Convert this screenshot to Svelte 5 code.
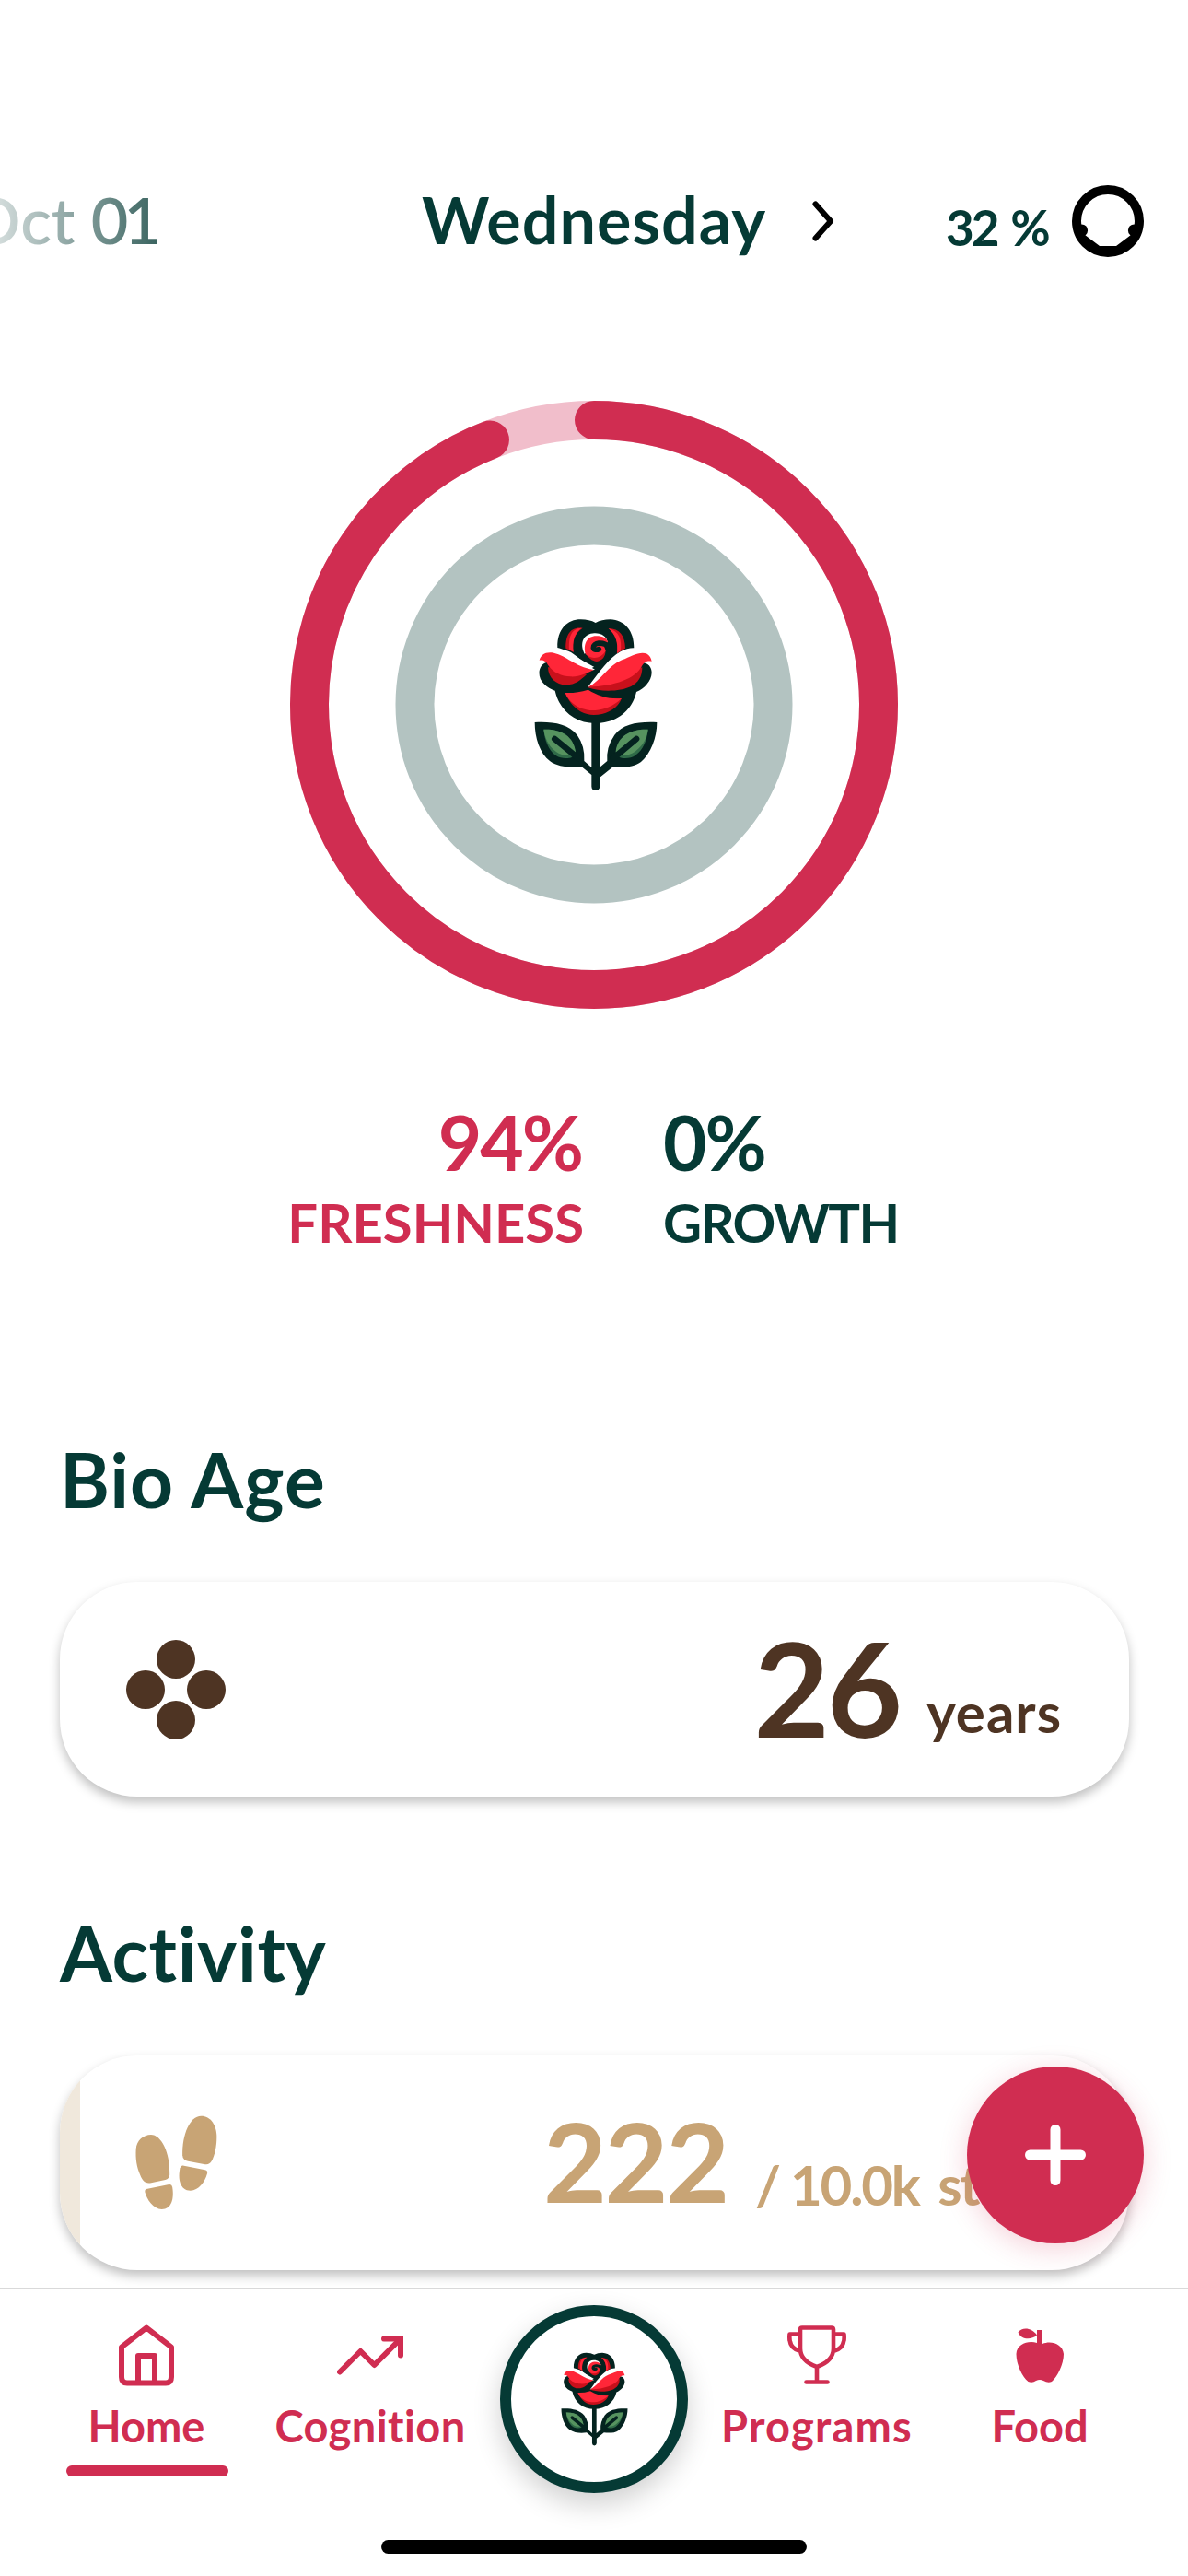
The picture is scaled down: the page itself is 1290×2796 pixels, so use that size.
<script>
  const freshness = 94;
  const growth = 0;
  const radius = 309;
  const length = 2 * Math.PI * radius;
  const steps = 222;
</script>

{#snippet rose()}
  <svg class="rose" viewBox="60 60 402 564">
    <g fill="#04231f">
      <path d="M136 156C134 96 168 64 212 64Q240 64 260 75Q280 64 308 64C354 66 386 100 385 158C350 170 330 190 262 222C200 190 170 164 136 156Z" />
      <path d="M102 203C70 212 70 254 92 274C104 286 116 292 128 296C142 360 192 402 260 402C328 402 380 360 393 300C420 290 442 264 443 238C443 220 432 206 413 205L300 200L262 215L240 226Z" />
      <path d="M247 390H273V546L298 525Q294 480 322 440C350 404 400 396 460 399C460 450 440 500 408 528C380 548 345 545 318 543L274 578V608Q272 621 260 621Q248 621 247 608V570L214 543C180 547 140 546 112 526C78 500 62 450 62 399C120 396 170 404 200 440Q226 476 223 525L247 546Z" />
    </g>
    <g fill="#fff">
      <path d="M100 172C130 155 160 160 180 171C206 188 226 210 258 227L220 236L120 190Z" />
      <path d="M234 286C272 234 304 190 342 168C370 154 400 150 424 174L380 210Z" />
      <path d="M224 176C206 140 222 110 256 109C280 108 296 120 299 137L250 160Z" />
    </g>
    <g fill="#c8101b">
      <path d="M218 92C184 88 162 106 163 158L188 170C184 136 190 110 218 92Z" />
      <path d="M302 93C338 94 356 116 357 158L330 174C334 138 326 114 302 93Z" />
      <path d="M105 220C106 256 134 278 164 277C196 276 210 262 232 242L160 220Z" />
      <path d="M236 286C276 300 338 300 376 282C398 270 412 252 412 220L330 250Z" />
      <path d="M161 303C180 350 216 375 254 375C298 375 334 352 345 321L250 320Z" />
      <path d="M226 168C232 188 250 200 264 201C282 198 292 186 293 166L260 160Z" />
    </g>
    <g fill="#ff2638">
      <path d="M214 92C184 94 172 114 174 162L188 170C184 136 190 110 214 92Z" />
      <path d="M302 93C338 102 346 130 342 166L330 174C334 138 326 114 302 93Z" />
      <path d="M77 197C82 178 98 168 124 173C166 182 190 216 254 228C230 240 206 252 178 250C150 248 122 238 105 212C100 200 88 194 77 197Z" />
      <path d="M236 284C278 264 300 214 346 196C378 184 404 166 428 176Q440 184 443 200C428 198 420 200 411 216C388 258 326 280 236 284Z" />
      <path d="M161 303Q196 305 236 293C270 314 304 324 345 321C318 348 280 362 242 360C204 354 176 338 161 303Z" />
      <path d="M228 178C218 146 232 118 262 118C284 118 298 126 300 138L288 150L293 166C284 184 262 194 244 187Q234 184 228 178Z" />
    </g>
    <path d="M304 154C284 134 252 140 253 156C255 164 264 164 271 161" fill="none" stroke="#04231f" stroke-width="17" stroke-linecap="round" />
    <g fill="#2f6b48">
      <path d="M91 422C146 420 188 442 195 500C190 520 150 520 132 508C106 490 94 456 91 422Z" />
      <path d="M431 422C376 420 332 442 326 500C330 520 372 520 390 506C416 488 428 456 431 422Z" />
    </g>
    <g fill="#56935f">
      <path d="M91 422C146 420 188 442 195 494C190 512 146 510 128 492C106 474 94 448 91 422Z" />
      <path d="M431 422C376 420 332 442 326 494C330 512 376 510 394 490C416 472 428 448 431 422Z" />
    </g>
    <path d="M127 453L204 516M393 453L318 516" stroke="#04231f" stroke-width="20" stroke-linecap="round" />
  </svg>
{/snippet}

<main class="screen">
  <header class="top">
    <span class="prev"><span class="t prev-t">Oct <span class="date">01</span></span></span>
    <span class="t day">Wednesday</span>
    <svg class="chev" viewBox="0 0 24 44"><path d="M3.5 3.5L20 22L3.5 40.5" /></svg>
    <span class="t battery">32 %</span>
    <svg class="gauge" viewBox="0 0 78 78">
      <circle cx="39" cy="39" r="34" fill="none" stroke="#000" stroke-width="10" />
      <circle cx="10.5" cy="49" r="6.6" /><circle cx="67.5" cy="49" r="6.6" />
      <path d="M14 54L30 66H48L64 54L60 66L39 76L18 66Z" />
    </svg>
  </header>

  <section class="rings">
    <svg viewBox="0 0 660 660">
      <g fill="none" stroke-width="42">
        <circle cx="330" cy="330" r={radius} stroke="#f1becb" />
        <circle cx="330" cy="330" r="194.5" stroke="#b3c3c1" />
        <circle cx="330" cy="330" r={radius} stroke="#d02d51" stroke-linecap="round"
          stroke-dasharray="{(length * freshness) / 100} {length}" transform="rotate(-90 330 330)" />
      </g>
    </svg>
    <div class="core">{@render rose()}</div>
  </section>

  <section class="stats">
    <div class="stat fresh"><span class="t pct">{freshness}%</span><span class="t lbl">FRESHNESS</span></div>
    <div class="stat grow"><span class="t pct">{growth}%</span><span class="t lbl">GROWTH</span></div>
  </section>

  <h2 class="t bio">Bio Age</h2>
  <section class="card age">
    <svg class="dots" viewBox="0 0 108 108">
      <circle cx="54" cy="21" r="21" /><circle cx="21" cy="54" r="21" /><circle cx="87" cy="54" r="21" /><circle cx="54" cy="87" r="21" />
    </svg>
    <span class="t num">26</span><span class="t unit">years</span>
  </section>

  <h2 class="t act">Activity</h2>
  <section class="card walk">
    <div class="fill" style="width: {steps / 10}px"></div>
    <svg class="feet" viewBox="80 76 268 310">
      <path d="M131 139C164 139 194 196 192 270Q191 283 178 287L128 297C112 299 103 290 96 272C84 244 80 218 82 186C84 158 106 139 131 139Z" />
      <path d="M116 317L190 302Q199 301 201 311C207 350 198 383 166 383C138 382 118 352 111 326Q110 319 116 317Z" />
      <path d="M295 78C326 78 346 108 346 146C346 178 340 206 329 226Q322 238 308 236L252 226Q235 222 234 206C232 140 258 78 295 78Z" />
      <path d="M235 240L308 254Q317 256 315 266C308 294 286 322 260 322C226 321 218 284 226 248Q229 239 235 240Z" />
    </svg>
    <span class="t num">{steps}</span><span class="t unit">/ 10.0k <span class="word">steps</span></span>
  </section>

  <button class="fab" aria-label="Add">
    <svg viewBox="0 0 66 66"><path d="M33 5.5V60.5M5.5 33H60.5" /></svg>
  </button>

  <nav class="bar">
    <div class="tab home">
      <svg viewBox="0 0 72 72" fill="none" stroke="currentColor" stroke-width="6" stroke-linejoin="round" stroke-linecap="round">
        <path d="M9 27.500L36 6.500L63 27.500V60Q63 66.500 57 66.500H15Q9 66.500 9 60ZM27 66V37H45V66" />
      </svg>
      <span class="t">Home</span>
      <i class="mark"></i>
    </div>
    <div class="tab cog">
      <svg viewBox="0 0 72 72" fill="none" stroke="currentColor" stroke-width="6" stroke-linejoin="round" stroke-linecap="round">
        <path d="M3 54.500L25.500 32L40.500 47L69 18.500" />
        <path d="M51 18.500H69V36.500" stroke-linejoin="miter" />
      </svg>
      <span class="t">Cognition</span>
    </div>
    <button class="center" aria-label="Rose">{@render rose()}</button>
    <div class="tab prog">
      <svg viewBox="0 0 72 72" fill="none" stroke="currentColor" stroke-width="4.6" stroke-linejoin="round" stroke-linecap="round">
        <path d="M18 8.500Q18 6.500 20 6.500H52Q54 6.500 54 8.500V29C54 39 46 45.500 36 49C26 45.500 18 39 18 29ZM18 13.500H6.500C5.500 23 9 30 18 32M54 13.500H65.500C66.500 23 63 30 54 32M36 49V65.500M24.500 65.500H47.500" />
      </svg>
      <span class="t">Programs</span>
    </div>
    <div class="tab food">
      <svg viewBox="0 0 72 72" fill="currentColor">
        <path d="M33 9H39V24C48 20 61 24 62 35C62 46 55 60 49 65Q45 67 40 64Q36 62 32 64Q28 67 23.500 65C17 60 10.500 46 10.500 35C11 24 24 20 33 23Z" />
        <path d="M12.500 11.500C17 5.500 27 6 33 14.500C27 20 16 20 12.500 11.500Z" />
      </svg>
      <span class="t">Food</span>
    </div>
  </nav>
  <div class="indicator"></div>
</main>

<style>
  :global(body) { background: #fff; overflow: hidden; }
  * { box-sizing: border-box; }
  .screen { width: 1290px; height: 2796px; position: relative; overflow: hidden; background: #fff; color: #053a35; display: flex; flex-direction: column; font-family: Lato, "Open Sans", sans-serif; font-weight: 700; font-variant-ligatures: none; }
  .t { white-space: nowrap; line-height: 1; display: block; }
  svg { display: block; flex: none; }
  .top { height: 174px; margin-top: 153px; display: flex; align-items: center; flex: none; }
  .prev { width: 175px; margin-right: 283px; display: flex; justify-content: flex-end; }
  .prev-t, .day { font-size: 70px; padding-bottom: 4px; }
  .prev-t { font-weight: 600; padding-right: 5px; background: linear-gradient(90deg, #053a3510, #053a35cc); -webkit-background-clip: text; background-clip: text; color: transparent; }
  .date { letter-spacing: -5px; }
  .day { width: 373px; letter-spacing: 1px; }
  .chev { width: 24px; height: 44px; margin-left: 51px; fill: none; stroke: #000; stroke-width: 6; stroke-linecap: round; stroke-linejoin: round; }
  .battery { font-size: 53px; letter-spacing: -3px; word-spacing: 5px; margin-left: 121px; width: 110px; padding-top: 13px; }
  .gauge { width: 78px; margin-left: 27px; }
  .rings { width: 660px; height: 660px; margin: 108px auto 0; display: grid; flex: none; }
  .rings > * { grid-area: 1 / 1; }
  .core { display: grid; place-items: center; }
  .core .rose { width: 134px; height: 188px; margin-left: 4px; }
  .stats { margin-top: 97px; height: 177px; display: flex; gap: 86px; flex: none; padding-left: 315px; }
  .stat { display: flex; flex-direction: column; }
  .fresh { width: 319px; align-items: flex-end; color: #d02d51; }
  .pct { font-size: 82px; height: 102px; line-height: 94px; letter-spacing: -2px; }
  .fresh .pct { padding-right: 2px; }
  .lbl { font-size: 58px; line-height: 66px; }
  .grow .lbl { letter-spacing: -1.6px; }
  h2 { margin: 0; font-size: 82px; font-weight: 700; padding-left: 65px; flex: none; }
  h2.t { line-height: 100px; letter-spacing: 1px; }
  .bio { margin-top: 186px; }
  h2.act { margin-top: 119px; letter-spacing: 0.6px; }
  .card { margin: 62px 64px 0 65px; height: 233px; border-radius: 84px; background: #fff; box-shadow: 0 6px 12px #00000040; display: flex; align-items: center; position: relative; overflow: hidden; flex: none; }
  .age { color: #4e3423; padding: 0 73px 0 72px; }
  .dots { width: 108px; fill: currentColor; margin-right: auto; }
  .num { font-size: 142px; padding-bottom: 5px; letter-spacing: -3px; }
  .unit { font-size: 60px; }
  .age .unit { margin-left: 29px; padding-top: 48px; letter-spacing: 1px; }
  .walk { color: #c8a475; padding-left: 82px; }
  .fill { position: absolute; left: 0; top: 0; bottom: 0; background: #f0e8dc; }
  .feet { width: 89px; height: 103px; fill: currentColor; }
  .walk .num { font-size: 119px; margin-left: 354px; letter-spacing: -2.4px; }
  .walk .unit { margin-left: 30px; padding-top: 46px; letter-spacing: -2.2px; }
  .word { margin-left: 8px; }
  .fab { position: absolute; left: 1050px; top: 2243px; width: 192px; height: 192px; border: 0; border-radius: 50%; background: #d02d51; box-shadow: 0 6px 30px #d02d5138; display: grid; place-items: center; padding: 0; }
  .fab svg { width: 66px; stroke: #fff; stroke-width: 11; stroke-linecap: round; }
  .bar { margin-top: 19px; height: 274px; border-top: 1px solid #d9d9d9; background: #fff; position: relative; display: flex; color: #d02d51; padding-left: 72px; flex: none; }
  .tab { display: flex; flex-direction: column; align-items: center; padding-top: 36px; }
  .tab svg { width: 72px; height: 72px; }
  .tab .t { font-size: 47px; margin-top: 18px; }
  .home { width: 176px; }
  .home svg, .home .t { position: relative; left: -1px; }
  .cog { width: 204px; margin-left: 52px; }
  .cog .t { letter-spacing: 0.4px; }
  .mark { width: 176px; height: 12px; border-radius: 6px; background: currentColor; margin-top: 19px; }
  .center { width: 204px; height: 204px; margin: 18px 38px 0 39px; padding: 0; border: 12px solid #053a35; border-radius: 50%; background: #fff; box-shadow: 0 12px 30px #00000030; display: grid; place-items: center; flex: none; }
  .center .rose { width: 73px; height: 102px; }
  .prog { width: 204px; }
  .prog .t { letter-spacing: 1.2px; }
  .food { width: 104px; margin-left: 88px; }
  .indicator { width: 462px; height: 15px; border-radius: 8px; background: #000; margin: 0 auto; flex: none; }
</style>
